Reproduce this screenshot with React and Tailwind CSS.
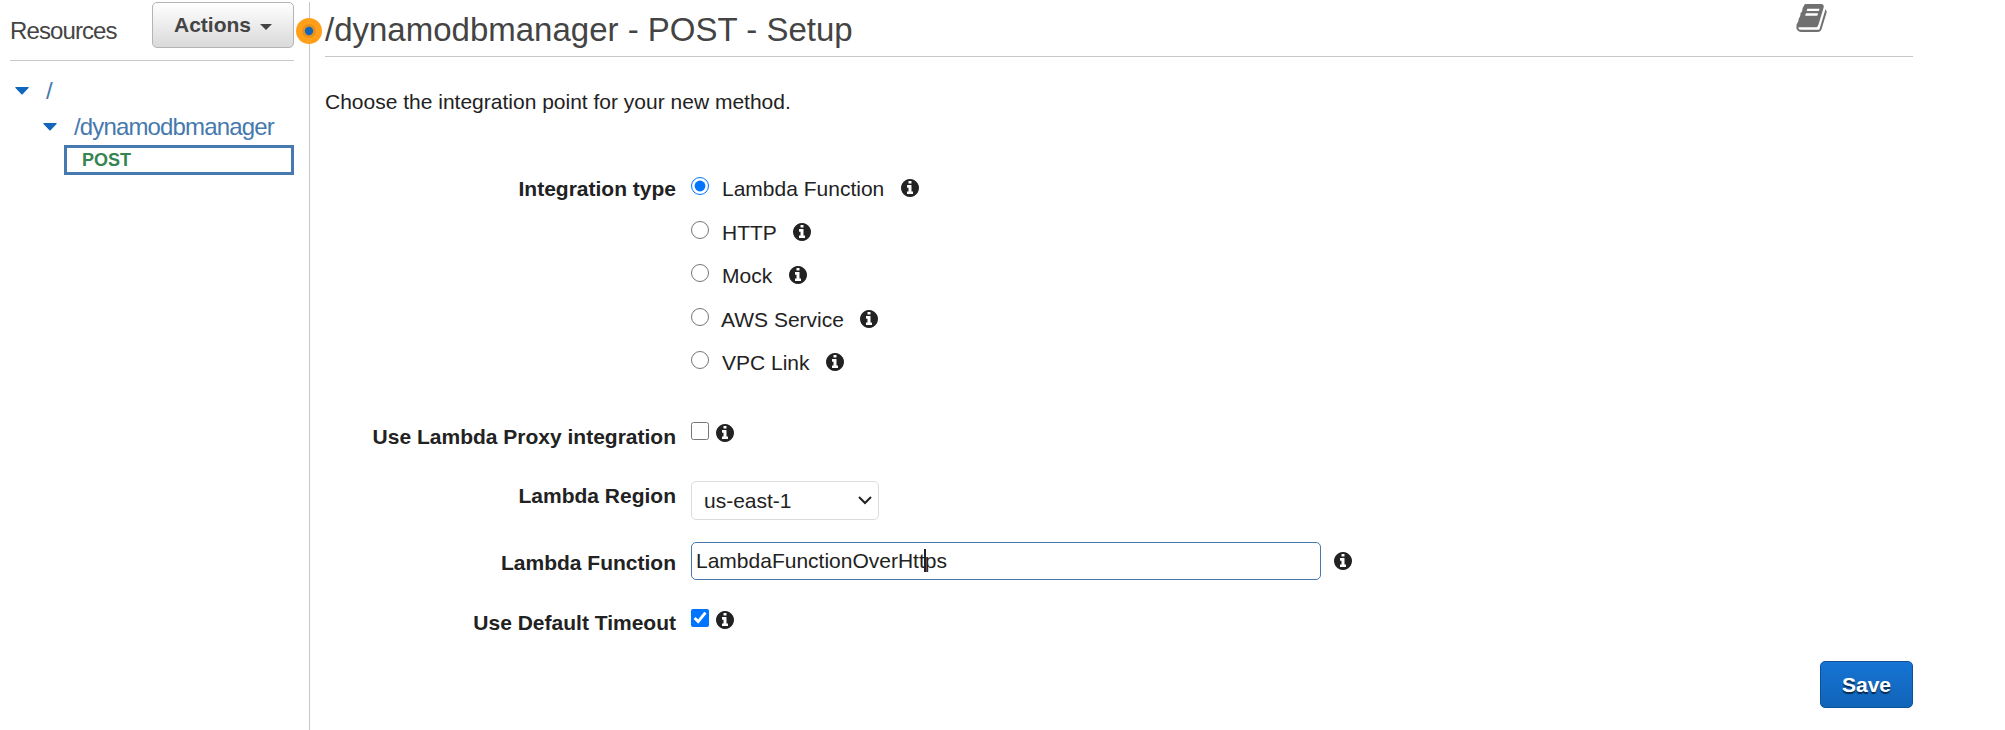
import React from "react";

const INFO_PATH =
  "M1152 1376v-160q0-14-9-23t-23-9h-96v-512q0-14-9-23t-23-9h-320q-14 0-23 9t-9 23v160q0 14 9 23t23 9h96v320h-96q-14 0-23 9t-9 23v160q0 14 9 23t23 9h448q14 0 23-9t9-23zm-128-896v-160q0-14-9-23t-23-9h-192q-14 0-23 9t-9 23v160q0 14 9 23t23 9h192q14 0 23-9t9-23zm640 416q0 209-103 385.5t-279.5 279.5-385.5 103-385.5-103-279.5-279.5-103-385.5 103-385.5 279.5-279.5 385.5-103 385.5 103 279.5 279.5 103 385.5z";

const BOOK_PATH =
  "M1639 478q40 57 18 129l-275 906q-19 64-76.5 107.5t-122.5 43.5h-923q-77 0-148.5-53.5t-99.5-131.5q-24-67-2-127 0-4 3-27t4-37q1-8-3-21.5t-3-19.5q2-11 8-21t16.5-23.5 16.5-23.5q23-38 45-91.5t30-91.5q3-10 .5-30t-.5-28q3-11 17-28t17-23q21-36 42-92t25-90q1-9-2.5-32t.5-28q4-13 22-30.5t22-22.5q19-26 42.5-84.5t27.5-96.5q1-8-3-25.5t-2-26.5q2-8 9-18t18-23 17-21q8-12 16.5-30.5t15-35 16-36 19.5-32 26.5-23.5 36-11.5 47.5 5.5l-1 3q38-9 51-9h761q74 0 114 56t18 130l-274 906q-36 119-71.5 153.5t-128.5 34.5h-869q-27 0-38 15-11 16-1 43 24 70 144 70h923q29 0 56-15.5t35-41.5l300-987q7-22 5-57 38 15 59 43zm-1064 2q-4 13 2 22.5t20 9.5h608q13 0 25.5-9.5t16.5-22.5l21-64q4-13-2-22.5t-20-9.5h-608q-13 0-25.5 9.5t-16.5 22.5zm-83 256q-4 13 2 22.5t20 9.5h608q13 0 25.5-9.5t16.5-22.5l21-64q4-13-2-22.5t-20-9.5h-608q-13 0-25.5 9.5t-16.5 22.5z";

function Info({ className = "" }) {
  return (
    <svg
      viewBox="128 128 1536 1536"
      className={`size-[18px] shrink-0 fill-[#222] ${className}`}
    >
      <path d={INFO_PATH} />
    </svg>
  );
}

function Caret({ className = "" }) {
  return (
    <svg viewBox="0 0 14 8" className={`h-2 w-3.5 shrink-0 fill-[#1166bb] ${className}`}>
      <path d="M0.6 0h12.8q.6.5.1 1L7.6 7.2q-.6.5-1.2 0L.5 1Q0 .5.6 0z" />
    </svg>
  );
}

function Row({ label, className = "", labelClass = "", children }) {
  return (
    <div className={`flex items-start ${className}`}>
      <div className={`w-[351px] shrink-0 text-right font-bold leading-[30px] ${labelClass}`}>{label}</div>
      <div className="ml-[15px] flex items-start">{children}</div>
    </div>
  );
}

const TYPES = ["Lambda Function", "HTTP", "Mock", "AWS Service", "VPC Link"];

function Sidebar() {
  return (
    <aside className="w-[309px] shrink-0 pl-2.5 pr-[15px] pt-0.5">
      <div className="flex h-[59px] items-start justify-between border-b border-[#c8c8c8]">
        <span className="mt-[14px] text-[24px] leading-[30px] tracking-[-0.9px] text-[#444]">Resources</span>
        <button className="flex h-[46px] w-[142px] items-center rounded-[5px] border border-[#b4b4b4] bg-linear-to-b from-white to-[#dadada] pl-[21px] font-bold text-[#444]">
          <span className="leading-[24px]">Actions</span>
          <svg viewBox="0 0 12 6" className="ml-[9px] mt-[3px] h-1.5 w-3 fill-[#444]">
            <path d="M0 0h12L6 6z" />
          </svg>
        </button>
      </div>
      <div className="mt-[12px] flex h-9 items-center pl-[5px] text-[24px] tracking-[-0.8px] text-[#4679ad]">
        <Caret />
        <span className="ml-[17px] leading-[30px]">/</span>
      </div>
      <div className="flex h-9 items-center pl-[33px] text-[24px] tracking-[-0.85px] text-[#4679ad]">
        <Caret />
        <span className="ml-[17px] leading-[30px]">/dynamodbmanager</span>
      </div>
      <div className="ml-[54px] flex h-[30px] items-center border-3 border-[#4679ad] pl-[15px] text-[18px] font-bold text-[#36844f]">
        <span className="leading-[22px]">POST</span>
      </div>
    </aside>
  );
}

export default function App() {
  return (
    <div className="flex h-[730px] w-[2005px] overflow-hidden bg-white font-['Liberation_Sans',Arial,sans-serif] text-[21px] text-[#222]">
      <Sidebar />
      <div className="relative mt-0.5 w-px shrink-0 bg-[#c8c8c8]">
        <svg viewBox="0 0 26 26" className="absolute -left-[13px] top-4 size-[26px] max-w-none">
          <circle cx="13" cy="13" r="13" fill="#ff9f1a" />
          <circle cx="13" cy="13" r="7" fill="#e6921a" />
          <circle cx="13" cy="13" r="4.2" fill="#1166bb" />
        </svg>
      </div>
      <main className="ml-[15px] w-[1588px]">
        <header className="flex h-[57px] items-start justify-between border-b border-[#c8c8c8]">
          <h1 className="mt-[10px] text-[33px] leading-[40px] text-[#444]">/dynamodbmanager - POST - Setup</h1>
          <svg viewBox="0 128 1664 1536" className="mr-[86px] mt-1 h-7 w-[31px] fill-[#707070]">
            <path d={BOOK_PATH} />
          </svg>
        </header>
        <p className="mt-[30px] leading-[30px]">Choose the integration point for your new method.</p>

        <Row label="Integration type" className="mt-[57px]">
          <div className="flex flex-col">
            {TYPES.map((t, i) => (
              <label key={t} className="flex h-[43.5px] items-start">
                <input type="radio" name="type" defaultChecked={i === 0} className="mt-[3px] size-[18px]" />
                <span className={`leading-[30px] ${t === "AWS Service" ? "ml-[12px]" : "ml-[13px]"}`}>{t}</span>
                <Info className="ml-[16.5px] mt-[5.2px]" />
              </label>
            ))}
          </div>
        </Row>

        <Row label="Use Lambda Proxy integration" className="mt-[30px] h-[59px]">
          <input type="checkbox" className="size-[18px]" />
          <Info className="ml-[7px] mt-[2.5px]" />
        </Row>

        <Row label="Lambda Region" className="h-[61px]">
          <div className="flex h-[39px] w-[188px] items-center justify-between rounded-[5px] border border-[#dcdcdc] pl-3 pr-[6px]">
            <span className="mt-0.5 leading-[30px]">us-east-1</span>
            <svg viewBox="0 0 14 9" className="h-[9px] w-3.5 fill-none stroke-[#222] stroke-2">
              <path d="M1 1l6 6 6-6" />
            </svg>
          </div>
        </Row>

        <Row label="Lambda Function" labelClass="mt-[6px]" className="h-[67px]">
          <div className="relative flex h-[38px] w-[630px] items-center rounded-[5px] border border-[#4679ad] pl-1">
            <span className="leading-[30px]">LambdaFunctionOverHttps</span>
            <span className="absolute left-[232px] top-1.5 h-[23px] w-0.5 bg-[#222]" />
          </div>
          <Info className="ml-[13px] mt-[10px]" />
        </Row>

        <Row label="Use Default Timeout" labelClass="-mt-px" className="h-[52px]">
          <input type="checkbox" defaultChecked className="size-[18px]" />
          <Info className="ml-[7px] mt-[2.5px]" />
        </Row>

        <div className="flex justify-end">
          <button className="h-[47px] w-[93px] rounded-[5px] border border-[#0d5197] bg-linear-to-b from-[#1674d4] to-[#1164b8] pt-0.5 font-bold text-white [text-shadow:0_2px_1px_rgba(0,0,0,0.6)]">
            Save
          </button>
        </div>
      </main>
    </div>
  );
}
